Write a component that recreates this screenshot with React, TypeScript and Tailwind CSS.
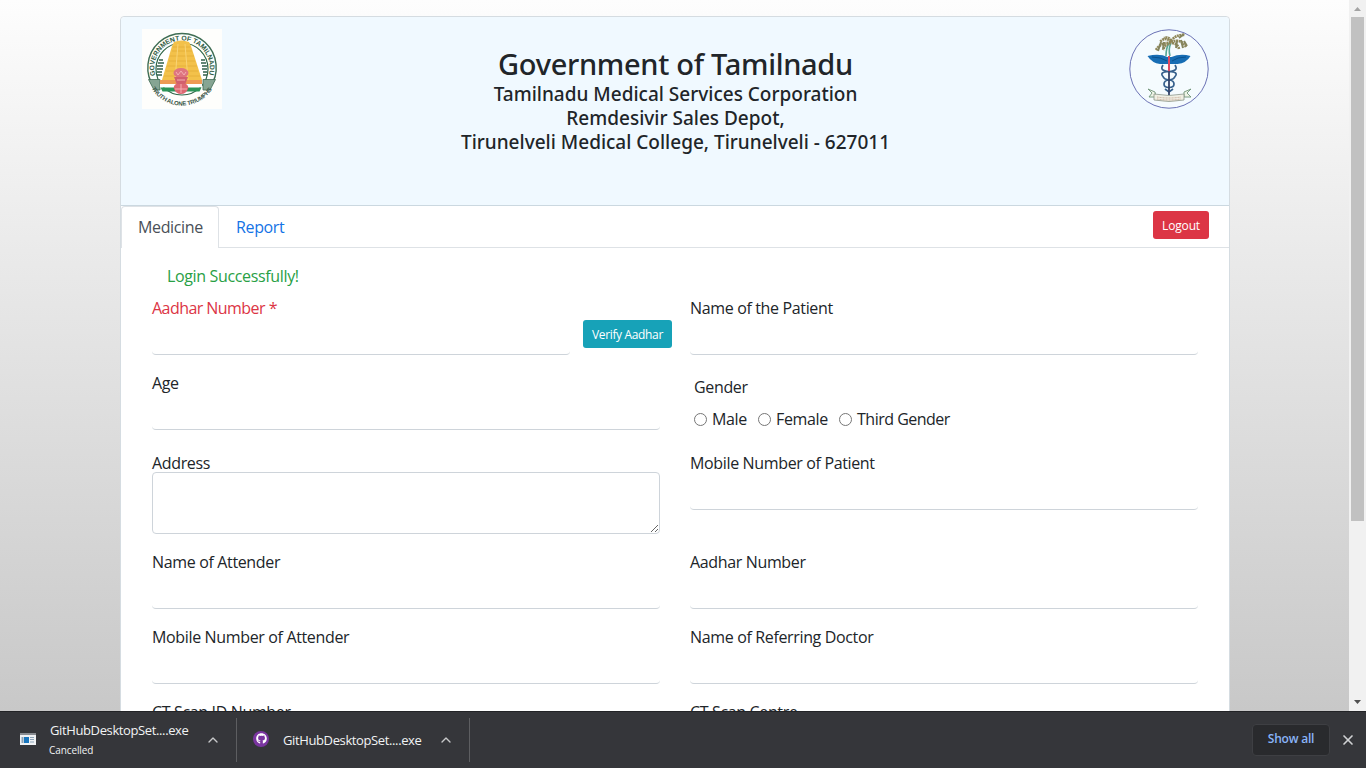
import type { ReactNode } from 'react';
import { ChevronUp, X } from 'lucide-react';
import { FaGithub } from 'react-icons/fa';

function StateEmblem() {
  return (
    <svg className="h-20 w-20 shrink-0 bg-[#fefefc]" viewBox="0 0 80 80">
      <defs>
        <path id="arc-top" d="M13.300 46.500 A 27.700 27.700 0 1 1 66.700 46.500" />
        <path id="arc-bottom" d="M9.500 59.500 A 35.800 35.800 0 0 0 70.500 59.500" />
      </defs>
      <path d="M12.500 59 A34.200 34.200 0 1 1 67.500 59" fill="#fdfefb" stroke="#3f6d54" strokeWidth="1.400" />
      <circle cx="40" cy="40" r="26" fill="#fff" stroke="#2f6548" strokeWidth="1.200" />
      <path d="M17 31h4M16 34h6M15 37h6M15 40h6M15 43h5M15 46h5M59 31h4M59 34h5M60 37h5M60 40h5M61 43h4M61 46h4" stroke="#315f4a" strokeWidth="1.500" />
      <path d="M6.500 50.500H18V61h-6zM73.500 50.500H61V61h7z" fill="#86a593" stroke="#426c56" strokeWidth=".8" />
      <path d="M32 13q7-3 15 0l2 4 11 34H20l10-34z" fill="#f3c14a" />
      <path d="M31 18h17M30 22h20M28 27h24M27 32h26M25 37h30M24 42h32M22 47h36" stroke="#e2ad38" strokeWidth=".8" />
      <path d="M36 15l-3 36M43 15l3 36" stroke="#f9d475" strokeWidth="1" />
      <path d="M18 51h42v4H18z" fill="#ed9a54" />
      <path d="M18 55h42v3.500H18z" fill="#fff" />
      <path d="M18.500 58.500h41l-2 4h-37z" fill="#2c9458" />
      <ellipse cx="39" cy="44" rx="7.500" ry="5" fill="#df7580" />
      <path d="M32 48h14l-3 8h-8z" fill="#d2606e" />
      <path d="M34 55q-3 2-2 5 2 5 7 5t7-5q1-3-2-5z" fill="#dd6872" />
      <path d="M34 43l2 3 3-4 3 4 2-3M35 51h8M33 60h12M39 55v9" fill="none" stroke="#f3afb2" strokeWidth="1" />
      <text className="font-['Liberation_Sans'] font-bold" fill="#315c45" fontSize="6.800">
        <textPath href="#arc-top" textLength="101">GOVERNMENT OF TAMILNADU</textPath>
      </text>
      <text className="font-['Liberation_Sans'] font-bold" fill="#3b5548" fontSize="6">
        <textPath href="#arc-bottom" textLength="72">TRUTH ALONE TRIUMPHS</textPath>
      </text>
    </svg>
  );
}

function MedicalEmblem() {
  return (
    <svg className="h-20 w-20 shrink-0" viewBox="0 0 80 80" fill="none">
      <circle cx="40" cy="40" r="39.200" fill="#f5fbfe" stroke="#6b72b5" strokeWidth="1" />
      <path d="M37 27q0-8 3-13M41 27q-2-7 1-13" stroke="#55a594" strokeWidth="1.600" />
      <path d="M42 13q-6-6-11 0M42 14q-10-1-15 7M42 14q-6 1-8 7M42 12q5-7 14-6M42 13q10-4 15 5M43 14q6 1 7 6M42 12q-2-5-7-3" stroke="#8f8658" strokeWidth="2.600" strokeDasharray="2 .6" />
      <path d="M32 13l-3 9M35 13l-1 7M50 9l5-4M52 11l2 8M48 12l-1 7M55 12l3 5" stroke="#85845d" strokeWidth="2" />
      <path d="M18.500 27q12-3 20 1h4q9-4 19-1-4 7-13 8H31q-8-1-12.500-8z" fill="#176db4" />
      <path d="M23 28q9 0 15 4M57 28q-9 0-14 4" stroke="#07518f" strokeWidth="1" />
      <path d="M34 36q-4 6 6 6.500t6 5q-1 3-6 3.500t-5 4 5 3.500M46 36q4 6-6 6.500t-6 5q1 3 6 3.500t5 4-5 3.500M36 60l4 3 4-3" stroke="#36608c" strokeWidth="1.700" />
      <path d="M40 27v16" stroke="#df4a62" strokeWidth="2" />
      <path d="M40 42v24" stroke="#354369" strokeWidth="1.800" />
      <path d="M26 63l-7-3 4 4-3 4h7zM55 63l7-3-4 4 4 4h-7z" fill="#eff4e7" stroke="#6f9377" strokeWidth=".9" />
      <path d="M25 65q15 3 30 0v6q-15 3-30 0z" fill="#f0efe3" stroke="#8c9589" strokeWidth=".8" />
      <path d="M28 68q12 2 24 0M28 70q12 2 24 0" stroke="#bf9e8b" strokeWidth=".8" strokeDasharray="1 .5" />
    </svg>
  );
}

function Field({ label, children }: { label: string; children?: ReactNode }) {
  return (
    <div className="w-[508px]">
      <label className="block h-6">{label}</label>
      {children ?? <input className="block h-[35px] w-full rounded border-b border-[#ced4da] outline-none" />}
    </div>
  );
}

function Gender({ label, className }: { label: string; className: string }) {
  return (
    <label className={`flex items-center gap-[5px] whitespace-nowrap ${className}`}>
      <input type="radio" name="gender" className="m-0 size-[13px]" />
      {label}
    </label>
  );
}

function Scrollbar() {
  return (
    <div className="flex w-[17px] flex-col items-center justify-between bg-[#f1f1f1]">
      <svg className="h-[17px] w-[17px]" viewBox="0 0 17 17"><path d="M5 11h7L8.500 7z" fill="#a3a3a3" /></svg>
      <div className="mb-auto h-[504px] w-[13px] bg-[#c1c1c1]" />
      <svg className="h-[17px] w-[17px]" viewBox="0 0 17 17"><path d="M5 6h7L8.500 10z" fill="#505050" /></svg>
    </div>
  );
}

export default function App() {
  return (
    <div className="flex h-screen w-[1366px] flex-col overflow-hidden font-['Open_Sans',sans-serif] text-base leading-6 text-[#212529]">
      <div className="flex h-[711px] shrink-0 overflow-hidden">
        <main className="w-[1349px] overflow-hidden bg-linear-to-b from-[#fdfdfd] to-[#c8c8c8] pt-4 pl-[120px]">
          <div className="h-[800px] w-[1110px] rounded border border-[#d5dce1] bg-white">
            <header className="flex h-[189px] items-start justify-between rounded-t border-b border-[#cbd8e0] bg-[#f0f9ff] pt-3 pr-5 pl-[21px]">
              <StateEmblem />
              <div className="pt-[17px] text-center font-['Noto_Sans',sans-serif] font-medium whitespace-nowrap">
                <h1 className="text-[29px] leading-[36px] tracking-[-0.3px]">Government of Tamilnadu</h1>
                <h2 className="text-[19px] leading-6">Tamilnadu Medical Services Corporation</h2>
                <h2 className="text-[19px] leading-6">Remdesivir Sales Depot,</h2>
                <h2 className="text-[19px] leading-6">Tirunelveli Medical College, Tirunelveli - 627011</h2>
              </div>
              <MedicalEmblem />
            </header>
            <nav className="flex h-[42px] items-start border-b border-[#dee2e6] tracking-[-0.35px]">
              <a className="h-[42px] w-[98px] rounded-t border border-b-0 border-[#dee2e6] bg-white pt-2 pl-4 text-[#495057]">Medicine</a>
              <a className="pt-[9px] pl-[17px] text-[#1473e6]">Report</a>
              <button className="mt-[5px] mr-5 ml-auto h-7 w-14 rounded-[3px] bg-[#dc3545] pt-px text-xs tracking-[-0.15px] text-white">Logout</button>
            </nav>
            <form className="pt-4 pl-[31px] tracking-[-0.35px]">
              <p className="pl-[15px] text-[#28a045]">Login Successfully!</p>
              <div className="mt-2 flex h-[75px]">
                <div className="w-[418px]">
                  <label className="block h-6 tracking-[-0.55px] text-[#dc3545]">Aadhar Number *</label>
                  <input className="block h-[35px] w-full rounded border-b border-[#ced4da] outline-none" />
                </div>
                <button type="button" className="mt-6 mr-[18px] ml-[13px] h-7 w-[89px] rounded-[3px] bg-[#17a2b8] pt-px text-xs tracking-[-0.35px] whitespace-nowrap text-white">Verify Aadhar</button>
                <Field label="Name of the Patient" />
              </div>
              <div className="flex h-20 gap-[30px]">
                <Field label="Age" />
                <div className="pt-1 pl-1">
                  <p>Gender</p>
                  <div className="mt-2 flex">
                    <Gender label="Male" className="w-16" />
                    <Gender label="Female" className="w-[81px]" />
                    <Gender label="Third Gender" className="w-32 tracking-[-0.5px]" />
                  </div>
                </div>
              </div>
              <div className="flex h-[99px] gap-[30px]">
                <Field label="Address">
                  <textarea className="-mt-[3px] block h-[62px] w-full rounded border border-[#ced4da] outline-none" />
                </Field>
                <Field label="Mobile Number of Patient" />
              </div>
              <div className="flex h-[75px] gap-[30px]"><Field label="Name of Attender" /><Field label="Aadhar Number" /></div>
              <div className="flex h-[75px] gap-[30px]"><Field label="Mobile Number of Attender" /><Field label="Name of Referring Doctor" /></div>
              <div className="flex h-[75px] gap-[30px]"><Field label="CT Scan ID Number" /><Field label="CT Scan Centre" /></div>
            </form>
          </div>
        </main>
        <Scrollbar />
      </div>
      <footer className="flex h-[57px] shrink-0 items-center border-t border-[#222326] bg-[#35363a] text-[13px] text-[#f1f3f4]">
        <div className="flex h-[44px] w-[237px] items-center border-r border-[#5d5e61] pl-5">
          <svg className="mb-0.5 h-4 w-4" viewBox="0 0 16 16">
            <path d="M0 2h16v12H0z" fill="#f0f2f4" /><path d="M0 2h16v2H0z" fill="#888c91" />
            <path d="M4 6h5v6H4z" fill="#1976bd" /><path d="M1.500 6h2v6h-2zM10 6h4v1h-4zM10 8h4v1h-4zM10 10.500h4v1h-4z" fill="#8ba3b7" />
          </svg>
          <div className="ml-[14px] w-[155px] whitespace-nowrap">
            <p className="leading-5 tracking-[-0.38px]">GitHubDesktopSet....exe</p>
            <p className="-ml-px text-[10px] leading-5 tracking-[-0.1px]">Cancelled</p>
          </div>
          <ChevronUp className="size-4 text-[#c8c9cb]" strokeWidth={2} />
        </div>
        <div className="flex h-[44px] w-[233px] items-center border-r border-[#5d5e61] pl-4">
          <span className="mb-[3px] flex size-4 items-center justify-center rounded-full bg-[#7a35a0]">
            <FaGithub className="size-[11px] text-white" />
          </span>
          <span className="ml-[14px] w-[155px] tracking-[-0.38px] whitespace-nowrap">GitHubDesktopSet....exe</span>
          <ChevronUp className="size-4 text-[#c8c9cb]" strokeWidth={2} />
        </div>
        <button className="mr-[10px] ml-auto flex h-8 w-[78px] justify-center rounded border border-[#3e3f43] bg-[#292a2d] pt-[6px] text-xs leading-4 font-semibold tracking-[-0.2px] text-[#8ab4f8]">Show all</button>
        <X className="mr-2.5 size-4 text-[#d0d1d3]" strokeWidth={2.500} />
      </footer>
    </div>
  );
}
